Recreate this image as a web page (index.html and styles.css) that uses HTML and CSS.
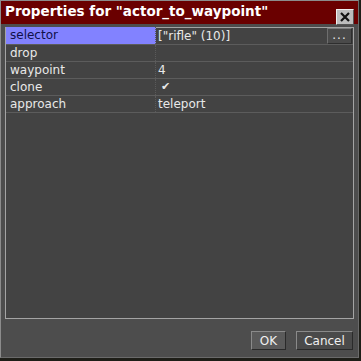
FILE: index.html
```html
<!DOCTYPE html>
<html>
<head>
<meta charset="utf-8">
<link rel="stylesheet" href="styles.css">
</head>
<body>
<div class="window">
  <div class="titlebar">
    <span class="title">Properties for "actor_to_waypoint"</span>
    <span class="close">
      <svg width="12" height="12" viewBox="0 0 12 12"><path d="M2 2L10 10M10 2L2 10" stroke="#111" stroke-width="2.2"/></svg>
    </span>
  </div>
  <div class="content">
    <div class="table">
      <div class="row">
        <div class="key selected">selector</div>
        <div class="val">["rifle" (10)]<span class="dots">...</span></div>
      </div>
      <div class="row"><div class="key">drop</div><div class="val"></div></div>
      <div class="row"><div class="key">waypoint</div><div class="val">4</div></div>
      <div class="row"><div class="key">clone</div><div class="val check">✔</div></div>
      <div class="row"><div class="key">approach</div><div class="val">teleport</div></div>
    </div>
  </div>
  <div class="footer">
    <button class="btn ok">OK</button>
    <button class="btn">Cancel</button>
  </div>
</div>
</body>
</html>
```
FILE: styles.css
```css
html, body {
  margin: 0;
  padding: 0;
  background: #1e1e18;
  width: 361px;
  height: 361px;
  overflow: hidden;
}
.window {
  width: 359px;
  height: 358px;
  box-sizing: border-box;
  border-left: 1px solid #8c8c8c;
  border-top: 1px solid #8c8c8c;
  border-right: 1px solid #6a6a6a;
  border-bottom: 1px solid #6a6a6a;
  background: #4d4d4d;
  display: flex;
  flex-direction: column;
  font-family: "DejaVu Sans", Verdana, sans-serif;
  color: #e8e8e8;
}
.titlebar {
  height: 23px;
  background: #6a0000;
  display: flex;
  align-items: center;
  justify-content: space-between;
  padding: 0 5px 0 4px;
}
.title {
  font-weight: bold;
  font-size: 13.5px;
  color: #fff;
  letter-spacing: 0;
  position: relative;
  top: -2px;
}
.close {
  width: 18px;
  height: 16px;
  box-sizing: border-box;
  background: #bdbdbd;
  border: 1px solid #eee;
  border-right-color: #555;
  border-bottom-color: #555;
  display: flex;
  align-items: center;
  justify-content: center;
  margin-top: 8px;
  margin-right: -1px;
}
.content {
  padding: 3px 4px 0 4px;
}
.table {
  height: 292px;
  box-sizing: border-box;
  border: 1px solid #a4a4a4;
  background: #434343;
  font-size: 12px;
}
.row {
  display: flex;
  height: 17px;
  border-bottom: 1px solid #5c5c5c;
  box-sizing: border-box;
}
.key {
  width: 145px;
  padding-left: 4px;
  line-height: 16px;
  border-right: 1px dotted #5a5a5a;
}
.key.selected {
  background: #8282ff;
  color: #10104a;
  margin-top: -1px;
  line-height: 17px;
  height: 17px;
}
.val {
  flex: 1;
  padding-left: 2px;
  line-height: 16px;
  position: relative;
}
.check {
  padding-left: 5px;
  font-size: 11px;
}
.dots {
  position: absolute;
  right: 1px;
  top: 0;
  width: 25px;
  height: 16px;
  box-sizing: border-box;
  border: 1px solid #6e6e6e;
  border-top-color: #7c7c7c;
  border-bottom-color: #2e2e2e;
  border-right-color: #2e2e2e;
  background: #4a4a4a;
  text-align: center;
  line-height: 12px;
  letter-spacing: 1px;
}
.footer {
  display: flex;
  justify-content: flex-end;
  gap: 10px;
  padding: 12px 5px 0 0;
}
.btn {
  font-family: "DejaVu Sans", Verdana, sans-serif;
  font-size: 12px;
  color: #f0f0f0;
  height: 19px;
  padding: 0;
  background: #4a4a4a;
  border: 1px solid #8a8a8a;
  border-right-color: #2a2a2a;
  border-bottom-color: #2a2a2a;
}
.btn.ok {
  width: 35px;
  background: #5a5a5a;
}
.btn:not(.ok) {
  width: 57px;
}
```
